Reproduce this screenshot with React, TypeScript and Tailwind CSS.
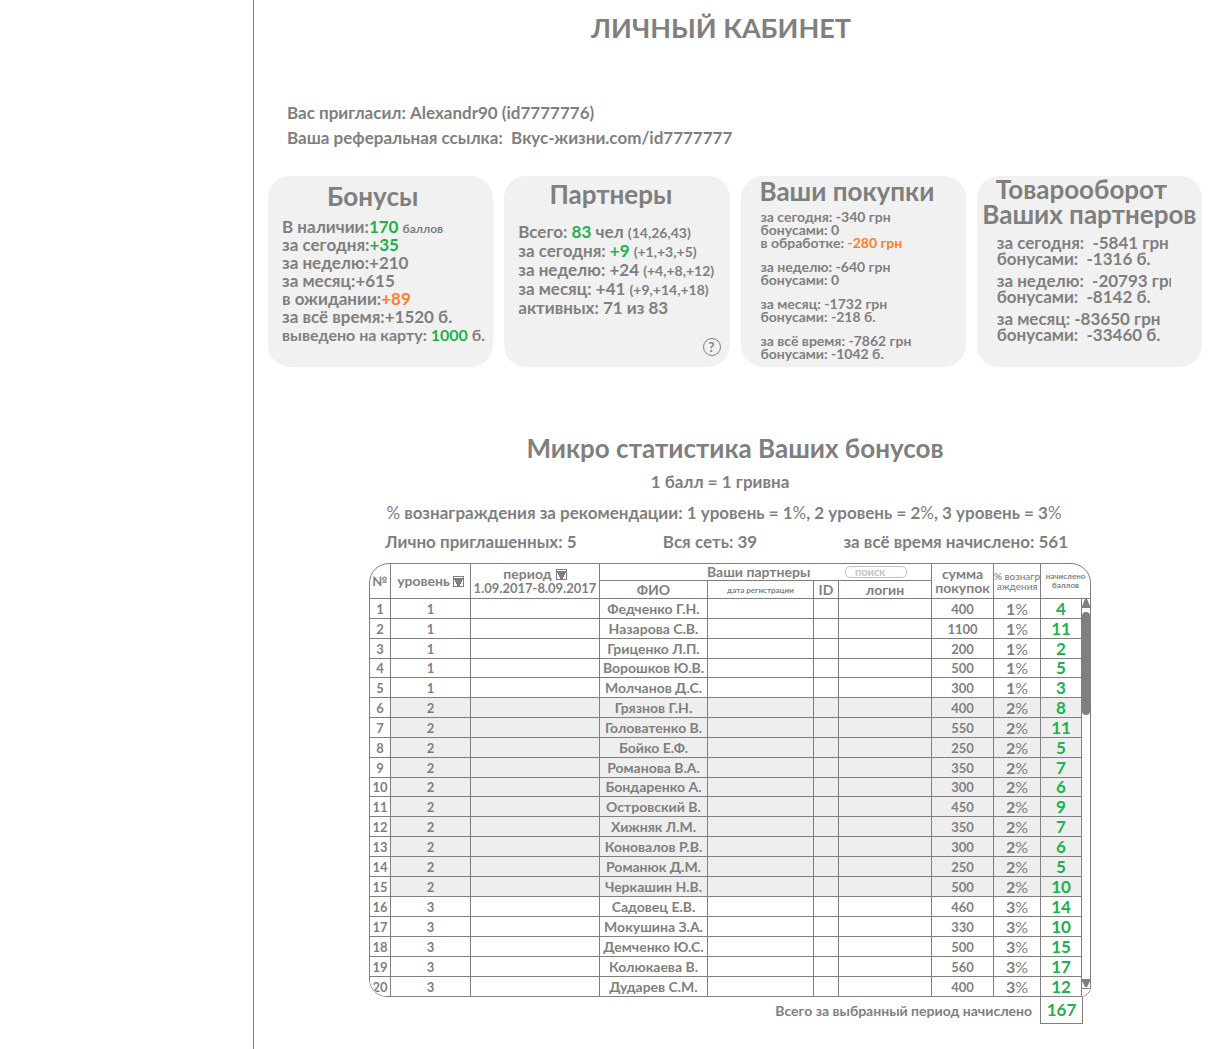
import type { ReactNode } from "react";

type Row = [name: string, level: number, sum: number, points: number];

const rows: Row[] = [
  ["Федченко Г.Н.", 1, 400, 4],
  ["Назарова С.В.", 1, 1100, 11],
  ["Гриценко Л.П.", 1, 200, 2],
  ["Ворошков Ю.В.", 1, 500, 5],
  ["Молчанов Д.С.", 1, 300, 3],
  ["Грязнов Г.Н.", 2, 400, 8],
  ["Головатенко В.", 2, 550, 11],
  ["Бойко Е.Ф.", 2, 250, 5],
  ["Романова В.А.", 2, 350, 7],
  ["Бондаренко А.", 2, 300, 6],
  ["Островский В.", 2, 450, 9],
  ["Хижняк Л.М.", 2, 350, 7],
  ["Коновалов Р.В.", 2, 300, 6],
  ["Романюк Д.М.", 2, 250, 5],
  ["Черкашин Н.В.", 2, 500, 10],
  ["Садовец Е.В.", 3, 460, 14],
  ["Мокушина З.А.", 3, 330, 10],
  ["Демченко Ю.С.", 3, 500, 15],
  ["Колюкаева В.", 3, 560, 17],
  ["Дударев С.М.", 3, 400, 12],
];

const shortRows = [3, 9, 19];

const cell = "border-r border-b border-[#7f7f7f] p-0 text-center align-middle";

function Green({ children }: { children: ReactNode }) {
  return <span className="font-bold text-[#22b14c]">{children}</span>;
}

function Orange({ children }: { children: ReactNode }) {
  return <span className="font-bold text-[#ff7f27]">{children}</span>;
}

function Percent({ value }: { value: number }) {
  return (
    <>
      {value}
      <span className="font-normal">%</span>
    </>
  );
}

function Card({ children }: { children: ReactNode }) {
  return (
    <section className="relative min-h-[191px] whitespace-nowrap rounded-[22px] bg-[#f1f1f1]">
      {children}
    </section>
  );
}

function Levels({ children }: { children: ReactNode }) {
  return <span className="text-sm leading-none">{children}</span>;
}

function SortButton({ label }: { label: string }) {
  return (
    <button type="button" aria-label={label} className="inline-block align-middle">
      <svg width="11" height="11" viewBox="0 0 11 11" className="block" shapeRendering="crispEdges">
        <rect x="0.5" y="0.5" width="10" height="10" fill="#fff" stroke="#7f7f7f" />
        <path d="M1 2h9v2h-1v2h-1v2h-1v2h-3v-2h-1v-2h-1v-2h-1z" fill="#7f7f7f" />
      </svg>
    </button>
  );
}

function PurchaseGroup({ children }: { children: ReactNode }) {
  return <div className="pl-5 text-sm leading-[13px]">{children}</div>;
}

export default function App() {
  return (
    <div className="flex min-h-screen bg-white font-['Lato','Open_Sans',sans-serif] font-bold text-[#7f7f7f]">
      <aside className="w-[254px] shrink-0 border-r border-[#7f7f7f]" />
      <main className="min-w-0 flex-1 pr-4 pl-3.5">
        <h1 className="pt-2 pr-7 text-center text-[27px] leading-10 font-bold">ЛИЧНЫЙ КАБИНЕТ</h1>

        <div className="mt-[52px] pl-[19px] text-[17px] leading-[25px]">
          <p>Вас пригласил: Alexandr90 (id7777776)</p>
          <p>
            Ваша реферальная ссылка:&nbsp; <a href="#ref">Вкус-жизни.com/id7777777</a>
          </p>
        </div>

        <div className="mt-[26px] grid grid-cols-4 gap-[11px]">
          <Card>
            <h2 className="pt-1.5 pr-4 text-center text-[26px] leading-7 font-bold">Бонусы</h2>
            <div className="mt-2 pl-3.5 text-[17px] leading-[18px]">
              <p>
                В наличии:<Green>170</Green> <span className="text-xs leading-none">баллов</span>
              </p>
              <p>
                за сегодня:<Green>+35</Green>
              </p>
              <p>за неделю:+210</p>
              <p>за месяц:+615</p>
              <p>
                в ожидании:<Orange>+89</Orange>
              </p>
              <p>за всё время:+1520 б.</p>
              <p className="text-base leading-[18px]">
                выведено на карту: <Green>1000</Green> б.
              </p>
            </div>
          </Card>

          <Card>
            <h2 className="pt-1 pr-3 text-center text-[26px] leading-7 font-bold">Партнеры</h2>
            <div className="mt-3.5 pl-3.5 text-[17px] leading-[19px]">
              <p>
                Всего: <Green>83</Green> чел <Levels>(14,26,43)</Levels>
              </p>
              <p>
                за сегодня: <Green>+9</Green> <Levels>(+1,+3,+5)</Levels>
              </p>
              <p>
                за неделю: +24 <Levels>(+4,+8,+12)</Levels>
              </p>
              <p>
                за месяц: +41 <Levels>(+9,+14,+18)</Levels>
              </p>
              <p>активных: 71 из 83</p>
            </div>
            <button
              type="button"
              className="absolute right-[9px] bottom-[11px] flex size-[18px] items-center justify-center rounded-full border border-[#7f7f7f] text-[13px] leading-none"
            >
              ?
            </button>
          </Card>

          <Card>
            <h2 className="pt-px pl-[19px] text-[26px] leading-7 font-bold">Ваши покупки</h2>
            <div className="mt-[5px] flex flex-col gap-[11px]">
              <PurchaseGroup>
                <p>за сегодня: -340 грн</p>
                <p>бонусами: 0</p>
                <p>
                  в обработке: <Orange>-280 грн</Orange>
                </p>
              </PurchaseGroup>
              <PurchaseGroup>
                <p>за неделю: -640 грн</p>
                <p>бонусами: 0</p>
              </PurchaseGroup>
              <PurchaseGroup>
                <p>за месяц: -1732 грн</p>
                <p>бонусами: -218 б.</p>
              </PurchaseGroup>
              <PurchaseGroup>
                <p>за всё время: -7862 грн</p>
                <p>бонусами: -1042 б.</p>
              </PurchaseGroup>
            </div>
          </Card>

          <Card>
            <h2 className="pt-px text-center text-[26px] leading-[25px] font-bold">
              <span className="block pr-4">Товарооборот</span>
              <span className="block">Ваших партнеров</span>
            </h2>
            <div className="mt-2 flex flex-col gap-1.5 pl-5 text-[17px] leading-4">
              <div>
                <p>за сегодня: &nbsp;-5841 грн</p>
                <p>бонусами: &nbsp;-1316 б.</p>
              </div>
              <div>
                <p className="w-[174px] overflow-x-clip">за неделю: &nbsp;-20793 грн</p>
                <p>бонусами: &nbsp;-8142 б.</p>
              </div>
              <div>
                <p>за месяц: -83650 грн</p>
                <p>бонусами: &nbsp;-33460 б.</p>
              </div>
            </div>
          </Card>
        </div>

        <h2 className="mt-[65px] text-center text-[26px] leading-8 font-bold">Микро статистика Ваших бонусов</h2>
        <div className="ml-[101px] max-w-[722px]">
          <div className="text-[17px] leading-6 whitespace-nowrap">
            <p className="mt-1.5 pr-5 text-center">1 балл = 1 гривна</p>
            <p className="mt-[7px] pr-3 text-center">
              <span className="font-normal">%</span> вознаграждения за рекомендации: 1 уровень ={" "}
              <Percent value={1} />, 2 уровень = <Percent value={2} />, 3 уровень = <Percent value={3} />
            </p>
            <div className="mt-[5px] flex justify-between pr-[23px] pl-4">
              <p>Лично приглашенных: 5</p>
              <p>Вся сеть: 39</p>
              <p>за всё время начислено: 561</p>
            </div>
          </div>

          <div className="mt-[9px] overflow-hidden rounded-t-[20px] rounded-br-[10px] rounded-bl-[18px] border border-[#7f7f7f]">
            <table className="w-full table-fixed border-separate border-spacing-0 text-sm leading-[14px] whitespace-nowrap">
              <colgroup>
                <col className="w-[21px]" />
                <col className="w-20" />
                <col className="w-[129px]" />
                <col className="w-[108px]" />
                <col className="w-[106px]" />
                <col className="w-[25px]" />
                <col className="w-[93px]" />
                <col className="w-[62px]" />
                <col className="w-[47px]" />
                <col className="w-[41px]" />
                <col className="w-2" />
              </colgroup>
              <thead>
                <tr className="h-[17px]">
                  <th rowSpan={2} className={`${cell} text-[13px]`}>
                    №
                  </th>
                  <th rowSpan={2} className={cell}>
                    <div className="flex items-center justify-center gap-[3px]">
                      уровень <SortButton label="Сортировать по уровню" />
                    </div>
                  </th>
                  <th rowSpan={2} className={cell}>
                    <div className="flex items-center justify-center gap-1">
                      период <SortButton label="Выбрать период" />
                    </div>
                    <div className="text-[13px]">1.09.2017-8.09.2017</div>
                  </th>
                  <th colSpan={4} className={cell}>
                    <div className="flex items-center pl-[107px]">
                      <span>Ваши партнеры</span>
                      <input
                        type="search"
                        aria-label="Поиск партнера"
                        placeholder="поиск"
                        className="mr-6 ml-auto h-3 w-[62px] appearance-none rounded-[5px] border border-[#c3c3c3] p-0 pb-0.5 text-center text-[11px] leading-[8px] placeholder:text-[#c3c3c3]"
                      />
                    </div>
                  </th>
                  <th rowSpan={2} className={cell}>
                    сумма
                    <br />
                    покупок
                  </th>
                  <th rowSpan={2} className={`${cell} overflow-hidden text-[10px] leading-[10px] font-medium`}>
                    % вознагр
                    <br />
                    аждения
                  </th>
                  <th rowSpan={2} colSpan={2} className="border-b border-[#7f7f7f] p-0 text-[8px] leading-[9px]">
                    начислено
                    <br />
                    баллов
                  </th>
                </tr>
                <tr className="h-[18px]">
                  <th className={cell}>ФИО</th>
                  <th className={`${cell} text-[8px]`}>дата регистрации</th>
                  <th className={cell}>ID</th>
                  <th className={cell}>логин</th>
                </tr>
              </thead>
              <tbody>
                {rows.map(([name, level, sum, points], i) => {
                  const height = shortRows.includes(i) ? "h-[19px]" : "h-5";
                  const last = i === rows.length - 1 ? "border-b-0" : "";
                  const td = `${cell} ${last}`;
                  return (
                    <tr key={name} className={`${height} ${level === 2 ? "bg-[#eeeeee]" : "bg-white"}`}>
                      <td className={`${td} bg-white text-[13px]`}>{i + 1}</td>
                      <td className={`${td} text-[13px]`}>{level}</td>
                      <td className={td} />
                      <td className={td}>{name}</td>
                      <td className={td} />
                      <td className={td} />
                      <td className={td} />
                      <td className={`${td} text-[13px]`}>{sum}</td>
                      <td className={`${td} text-base leading-4`}>
                        <Percent value={level} />
                      </td>
                      <td className={`${td} text-[17px] leading-4`}>
                        <Green>{points}</Green>
                      </td>
                      {i === 0 && (
                        <td rowSpan={rows.length} className="h-[397px] bg-white p-0">
                          <div className="flex h-full flex-col items-center">
                            <button type="button" aria-label="Прокрутить вверх">
                              <svg width="8" height="9" viewBox="0 0 8 9" className="block">
                                <path d="M3 0h2l3 7v2H0V7z" fill="#7f7f7f" />
                              </svg>
                            </button>
                            <div className="mt-1 h-[103px] w-full rounded-[4px] bg-[#7f7f7f]" />
                            <button
                              type="button"
                              aria-label="Прокрутить вниз"
                              className="mt-auto mb-[7px] border-b border-[#7f7f7f]"
                            >
                              <svg width="8" height="9" viewBox="0 0 8 9" className="block">
                                <path d="M0 0h8v2L5 8H3L0 2z" fill="#7f7f7f" />
                              </svg>
                            </button>
                          </div>
                        </td>
                      )}
                    </tr>
                  );
                })}
              </tbody>
            </table>
          </div>
          <div className="flex items-center justify-end pr-2">
            <p className="pr-2 text-sm">Всего за выбранный период начислено</p>
            <p className="h-[27px] w-[43px] border border-t-0 border-[#7f7f7f] text-center text-[17px] leading-[26px]">
              <Green>167</Green>
            </p>
          </div>
        </div>
      </main>
    </div>
  );
}
